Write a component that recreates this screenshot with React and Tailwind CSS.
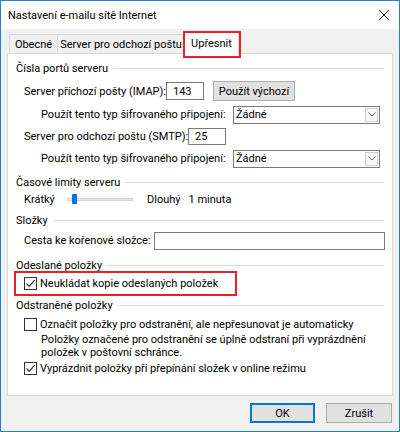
import React from "react";

const FONT = "font-['Roboto','Noto_Sans','Liberation_Sans',sans-serif]";

function GroupHeader({ title, className = "" }) {
  return (
    <div className={`flex items-center h-[16px] pl-[8px] pr-[8px] ${className}`}>
      <span className="whitespace-nowrap">{title}</span>
      <div className="flex-1 h-px bg-[#dcdcdc] ml-[5px]" />
    </div>
  );
}

function Check({ checked }) {
  return (
    <span className="w-[13px] h-[13px] border border-[#333333] bg-white flex items-center justify-center shrink-0">
      {checked && (
        <svg width="11" height="11" viewBox="0 0 11 11">
          <path d="M1.5 5.5 L4.2 8.3 L9.6 2.2" fill="none" stroke="#333333" strokeWidth="1.2" />
        </svg>
      )}
    </span>
  );
}

function Select() {
  return (
    <div className="w-[147px] h-[18px] border border-[#7a7a7a] bg-white flex items-center justify-between pl-[2px] pr-[1px] shrink-0">
      <span>Žádné</span>
      <span className="w-[13px] h-[14px] border border-[#cfcfcf] bg-[#f6f6f6] flex items-center justify-center">
        <svg width="8" height="5" viewBox="0 0 8 5">
          <path d="M0.5 0.5 L4 4 L7.5 0.5" fill="none" stroke="#606060" strokeWidth="1" />
        </svg>
      </span>
    </div>
  );
}

export default function App() {
  return (
    <div className={`relative w-[400px] h-[432px] border border-[#1e7fd6] bg-[#f0f0f0] flex flex-col text-[11px] text-black leading-none whitespace-nowrap ${FONT}`}>
      {/* Title bar */}
      <div className="h-[28px] bg-white flex items-center justify-between pl-[7px] pr-[9px] shrink-0 text-[11px]">
        <span>Nastavení e-mailu sítě Internet</span>
        <svg width="12" height="12" viewBox="0 0 12 12">
          <path d="M1 1 L11 11 M11 1 L1 11" stroke="#222" strokeWidth="1" />
        </svg>
      </div>

      {/* Body */}
      <div className="flex-1 flex flex-col px-[6px] pt-[3px]">
        {/* Tabs */}
        <div className="flex items-end h-[21px] pl-[2px] relative z-10">
          <div className="w-[49px] h-[19px] flex items-center justify-center border-t border-l border-r border-[#d9d9d9] bg-[#f0f0f0]">
            Obecné
          </div>
          <div className="w-[127px] h-[19px] flex items-center justify-center border-t border-r border-[#d9d9d9] bg-[#f0f0f0]">
            Server pro odchozí poštu
          </div>
          <div className="w-[55px] h-[22px] -mb-px -ml-px flex items-center justify-center border-t border-l border-r border-[#d9d9d9] bg-white">
            Upřesnit
          </div>
        </div>

        {/* Panel */}
        <div className="h-[343px] border border-[#d9d9d9] bg-white flex flex-col">
          <GroupHeader title="Čísla portů serveru" className="mt-[6px]" />

          <div className="flex items-center h-[20px] mt-[5px] pl-[16px]">
            <span className="w-[142px]">Server příchozí pošty (IMAP):</span>
            <div className="w-[38px] h-[18px] border border-[#7a7a7a] bg-white flex items-center pl-[6px]">143</div>
            <div className="ml-[9px] w-[82px] h-[20px] border border-[#adadad] bg-[#e1e1e1] flex items-center justify-center">
              Použít výchozí
            </div>
          </div>

          <div className="flex items-center h-[19px] mt-[4px] pl-[33px]">
            <span className="w-[192px]">Použít tento typ šifrovaného připojení:</span>
            <Select />
          </div>

          <div className="flex items-center h-[19px] mt-[3px] pl-[16px]">
            <span className="w-[164px]">Server pro odchozí poštu (SMTP):</span>
            <div className="w-[38px] h-[17px] border border-[#7a7a7a] bg-white flex items-center pl-[6px]">25</div>
          </div>

          <div className="flex items-center h-[19px] mt-[3px] pl-[33px]">
            <span className="w-[192px]">Použít tento typ šifrovaného připojení:</span>
            <Select />
          </div>

          <GroupHeader title="Časové limity serveru" className="mt-[6px]" />

          <div className="flex items-center h-[16px] mt-[1px] pl-[16px]">
            <span className="w-[43px]">Krátký</span>
            <div className="relative w-[66px] h-[16px] flex items-center">
              <div className="w-full h-[3px] bg-[#e7eaea] border border-[#d6d6d6]" />
              <div className="absolute left-[5px] top-[3px] w-[5px] h-[10px] bg-[#0078d7] rounded-[1px]" />
            </div>
            <span className="ml-[14px]">Dlouhý</span>
            <span className="ml-[8px]">1 minuta</span>
          </div>

          <GroupHeader title="Složky" className="mt-[5px]" />

          <div className="flex items-center h-[19px] mt-[3px] pl-[16px]">
            <span className="w-[130px]">Cesta ke kořenové složce:</span>
            <div className="w-[231px] h-[18px] border border-[#7a7a7a] bg-white" />
          </div>

          <GroupHeader title="Odeslané položky" className="mt-[7px]" />

          <div className="flex items-center h-[16px] mt-[2px] pl-[16px] gap-[3px]">
            <Check checked />
            <span>Neukládat kopie odeslaných položek</span>
          </div>

          <GroupHeader title="Odstraněné položky" className="mt-[6px]" />

          <div className="flex items-center h-[16px] mt-[3px] pl-[16px] gap-[3px]">
            <Check />
            <span>Označit položky pro odstranění, ale nepřesunovat je automaticky</span>
          </div>

          <div className="mt-[1px] pl-[33px] leading-[13px]">
            <div>Položky označené pro odstranění se úplně odstraní při vyprázdnění</div>
            <div>položek v poštovní schránce.</div>
          </div>

          <div className="flex items-center h-[16px] mt-[1px] pl-[16px] gap-[3px]">
            <Check checked />
            <span>Vyprázdnit položky při přepínání složek v online režimu</span>
          </div>
        </div>

        {/* Buttons */}
        <div className="flex justify-end gap-[11px] mt-[7px] pr-[1px]">
          <div className="w-[65px] h-[20px] border-2 border-[#0078d7] bg-[#e1e1e1] flex items-center justify-center">OK</div>
          <div className="w-[66px] h-[20px] border border-[#adadad] bg-[#e1e1e1] flex items-center justify-center">Zrušit</div>
        </div>
      </div>

      {/* Annotation highlights */}
      <div className="absolute left-[182px] top-[30px] w-[58px] h-[27px] border-2 border-[#e8202a] pointer-events-none z-20" />
      <div className="absolute left-[13px] top-[270px] w-[223px] h-[25px] border-2 border-[#e8202a] pointer-events-none z-20" />
    </div>
  );
}
